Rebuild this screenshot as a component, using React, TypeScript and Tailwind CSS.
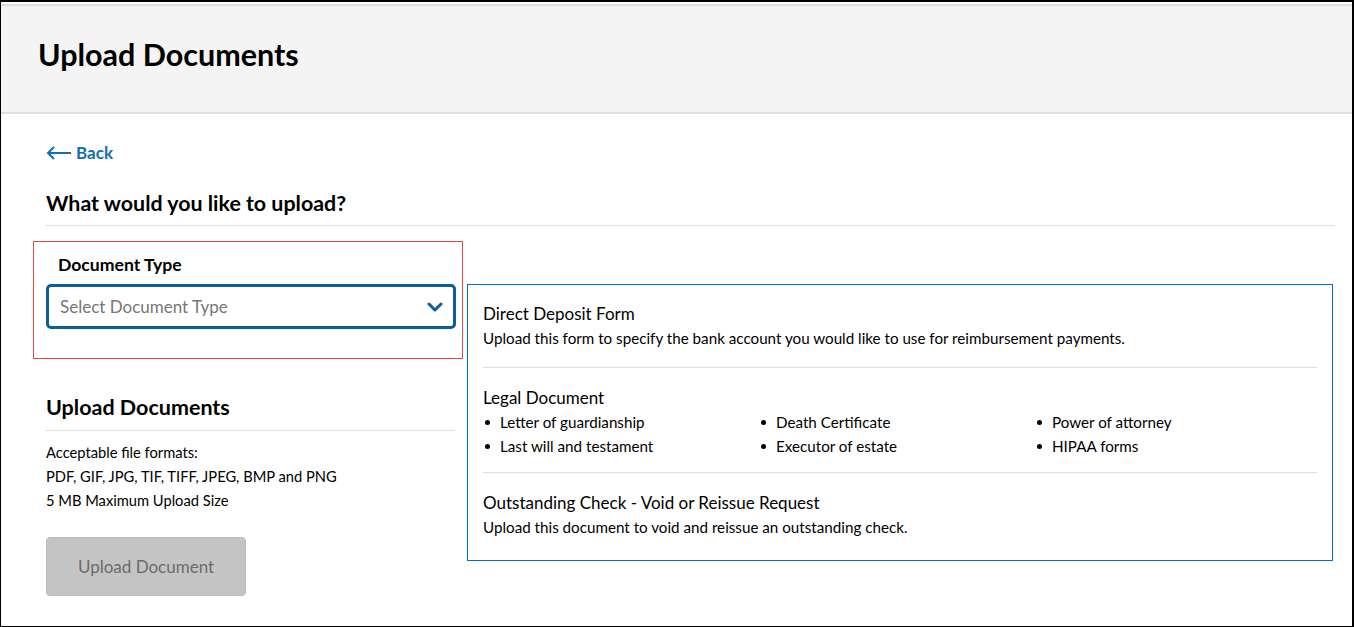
import React from "react";

const font = { fontFamily: "Lato, 'Noto Sans', sans-serif" };

function Bullet({ children }: { children: React.ReactNode }) {
  return (
    <li className="flex items-center h-6">
      <span className="w-[5px] h-[5px] rounded-full bg-black ml-[2px] mr-[10px]" />
      <span>{children}</span>
    </li>
  );
}

export default function App() {
  return (
    <div
      className="w-[1354px] h-[627px] bg-white border-t-2 border-l border-r-2 border-b border-black text-[#1b1b1b] overflow-hidden"
      style={font}
    >
      <div className="mt-[2px] border-t-2 border-b-2 border-[#dfdfdf] bg-[#f4f4f4] h-[110px] flex items-center pl-[37px]">
        <h1 className="text-[30.5px] font-bold text-black -mt-[9px]">Upload Documents</h1>
      </div>

      <div className="pl-[45px] pr-[17px]">
        <a className="flex items-center mt-[27px] h-6 text-[17px] font-bold text-[#0f6fb5] gap-[4px]">
          <svg width="26" height="14" viewBox="0 0 26 14" fill="none" stroke="#0f6fb5" strokeWidth="2">
            <path d="M25 7H2" />
            <path d="M8 1L2 7l6 6" />
          </svg>
          Back
        </a>

        <h2 className="mt-[26px] text-[21.4px] font-bold text-black leading-6">What would you like to upload?</h2>
        <div className="mt-[10px] border-t border-[#dddddd]" />

        <div className="flex mt-[15px] gap-[12px]">
          <div className="w-[422px] shrink-0 -ml-[13px]">
            <div className="border border-[#ef4444] w-[430px] h-[118px] pl-[12px] pr-[6px] pt-[13px]">
              <div className="text-[17.6px] font-bold text-black leading-5 ml-[12px]">Document Type</div>
              <div className="mt-[9px] h-[45px] border-[3px] border-[#0b5d9c] rounded-[5px] flex items-center justify-between pl-[11px] pr-[10px]">
                <span className="text-[17px] text-[#767676]">Select Document Type</span>
                <svg width="16" height="10" viewBox="0 0 16 10" fill="none" stroke="#0b5d9c" strokeWidth="3" strokeLinecap="round" strokeLinejoin="round">
                  <path d="M2 2l6 6 6-6" />
                </svg>
              </div>
            </div>

            <div className="pl-[13px] w-[422px]">
              <h2 className="mt-[36px] text-[21.5px] font-bold text-black leading-6">Upload Documents</h2>
              <div className="mt-[11px] border-t border-[#dddddd] w-[409px]" />
              <div className="mt-[9px] text-[14.7px] leading-6 text-black">
                <div>Acceptable file formats:</div>
                <div>PDF, GIF, JPG, TIF, TIFF, JPEG, BMP and PNG</div>
                <div>5 MB Maximum Upload Size</div>
              </div>
              <button className="mt-[25px] w-[200px] h-[59px] bg-[#c4c4c4] rounded-[4px] border border-[#bbbbbb] text-[17px] text-[#6b6b6b]">
                Upload Document
              </button>
            </div>
          </div>

          <div className="mt-[43px] w-[866px] h-[277px] border border-[#0071bc] px-[15px] self-start">
            <div className="pt-[17px] pb-[17px] border-b border-[#dddddd]">
              <div className="text-[17px] leading-6 text-black">Direct Deposit Form</div>
              <div className="text-[15.2px] leading-6 text-black">
                Upload this form to specify the bank account you would like to use for reimbursement payments.
              </div>
            </div>
            <div className="pt-[18px] pb-[14px] border-b border-[#dddddd]">
              <div className="text-[17px] leading-6 text-black">Legal Document</div>
              <ul className="grid grid-cols-[276px_276px_1fr] text-[15.2px] text-black">
                <Bullet>Letter of guardianship</Bullet>
                <Bullet>Death Certificate</Bullet>
                <Bullet>Power of attorney</Bullet>
                <Bullet>Last will and testament</Bullet>
                <Bullet>Executor of estate</Bullet>
                <Bullet>HIPAA forms</Bullet>
              </ul>
            </div>
            <div className="pt-[18px]">
              <div className="text-[17px] leading-6 text-black">Outstanding Check - Void or Reissue Request</div>
              <div className="text-[15.2px] leading-6 text-black">
                Upload this document to void and reissue an outstanding check.
              </div>
            </div>
          </div>
        </div>
      </div>
    </div>
  );
}
